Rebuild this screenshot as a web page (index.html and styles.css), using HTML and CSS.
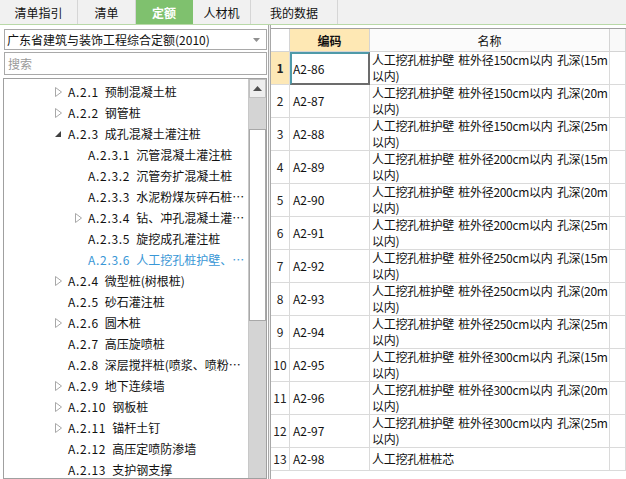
FILE: index.html
```html
<!DOCTYPE html>
<html lang="zh-CN">
<head>
<meta charset="utf-8">
<title>定额</title>
<link rel="stylesheet" href="styles.css">
</head>
<body>
<div class="tabbar">
  <div class="tab t1">清单指引</div>
  <div class="tab t2">清单</div>
  <div class="tab t3 active">定额</div>
  <div class="tab t4">人材机</div>
  <div class="tab t5">我的数据</div>
  <div class="tabfill"></div>
</div>
<div class="main">
  <div class="left">
    <div class="select">
      <span class="select-text">广东省建筑与装饰工程综合定额(2010)</span>
      <svg class="select-arrow" width="7" height="4" viewBox="0 0 7 4"><polygon points="0,0 7,0 3.5,4" fill="#909090"/></svg>
    </div>
    <div class="search">搜索</div>
    <div class="tree">
      <div class="tree-list">
        <div class="item l1"><span class="tw"><svg class="tri-c" width="7" height="10" viewBox="0 0 7 10"><polygon points="0.5,0.5 6.5,5 0.5,9.5" fill="#fff" stroke="#a8a8a8"/></svg></span><span class="code">A.2.1</span>预制混凝土桩</div>
        <div class="item l1"><span class="tw"><svg class="tri-c" width="7" height="10" viewBox="0 0 7 10"><polygon points="0.5,0.5 6.5,5 0.5,9.5" fill="#fff" stroke="#a8a8a8"/></svg></span><span class="code">A.2.2</span>钢管桩</div>
        <div class="item l1"><span class="tw"><svg class="tri-e" width="7" height="7" viewBox="0 0 7 7"><polygon points="6,0 6,6 0,6" fill="#404040"/></svg></span><span class="code">A.2.3</span>成孔混凝土灌注桩</div>
        <div class="item l2"><span class="tw"></span><span class="code">A.2.3.1</span>沉管混凝土灌注桩</div>
        <div class="item l2"><span class="tw"></span><span class="code">A.2.3.2</span>沉管夯扩混凝土桩</div>
        <div class="item l2"><span class="tw"></span><span class="code">A.2.3.3</span>水泥粉煤灰碎石桩…</div>
        <div class="item l2"><span class="tw"><svg class="tri-c" width="7" height="10" viewBox="0 0 7 10"><polygon points="0.5,0.5 6.5,5 0.5,9.5" fill="#fff" stroke="#a8a8a8"/></svg></span><span class="code">A.2.3.4</span>钻、冲孔混凝土灌…</div>
        <div class="item l2"><span class="tw"></span><span class="code">A.2.3.5</span>旋挖成孔灌注桩</div>
        <div class="item l2 sel"><span class="tw"></span><span class="code">A.2.3.6</span>人工挖孔桩护壁、…</div>
        <div class="item l1"><span class="tw"><svg class="tri-c" width="7" height="10" viewBox="0 0 7 10"><polygon points="0.5,0.5 6.5,5 0.5,9.5" fill="#fff" stroke="#a8a8a8"/></svg></span><span class="code">A.2.4</span>微型桩(树根桩)</div>
        <div class="item l1"><span class="tw"></span><span class="code">A.2.5</span>砂石灌注桩</div>
        <div class="item l1"><span class="tw"><svg class="tri-c" width="7" height="10" viewBox="0 0 7 10"><polygon points="0.5,0.5 6.5,5 0.5,9.5" fill="#fff" stroke="#a8a8a8"/></svg></span><span class="code">A.2.6</span>圆木桩</div>
        <div class="item l1"><span class="tw"></span><span class="code">A.2.7</span>高压旋喷桩</div>
        <div class="item l1"><span class="tw"></span><span class="code">A.2.8</span>深层搅拌桩(喷浆、喷粉…</div>
        <div class="item l1"><span class="tw"><svg class="tri-c" width="7" height="10" viewBox="0 0 7 10"><polygon points="0.5,0.5 6.5,5 0.5,9.5" fill="#fff" stroke="#a8a8a8"/></svg></span><span class="code">A.2.9</span>地下连续墙</div>
        <div class="item l1"><span class="tw"><svg class="tri-c" width="7" height="10" viewBox="0 0 7 10"><polygon points="0.5,0.5 6.5,5 0.5,9.5" fill="#fff" stroke="#a8a8a8"/></svg></span><span class="code">A.2.10</span>钢板桩</div>
        <div class="item l1"><span class="tw"><svg class="tri-c" width="7" height="10" viewBox="0 0 7 10"><polygon points="0.5,0.5 6.5,5 0.5,9.5" fill="#fff" stroke="#a8a8a8"/></svg></span><span class="code">A.2.11</span>锚杆土钉</div>
        <div class="item l1"><span class="tw"></span><span class="code">A.2.12</span>高压定喷防渗墙</div>
        <div class="item l1"><span class="tw"></span><span class="code">A.2.13</span>支护钢支撑</div>
      </div>
      <div class="vscroll">
        <div class="sb-btn"><svg width="9" height="5" viewBox="0 0 9 5"><polygon points="0,5 9,5 4.5,0" fill="#505050"/></svg></div>
        <div class="sb-track-top"></div>
        <div class="sb-thumb"></div>
        <div class="sb-track"></div>
      </div>
    </div>
  </div>
  <div class="splitter"></div>
  <div class="grid">
    <div class="hd rn"></div><div class="hd code-h">编码</div><div class="hd name-h">名称</div><div class="hd ex"></div>

    <div class="c rn cur">1</div><div class="c cd focus">A2-86</div><div class="c nm">人工挖孔桩护壁 桩外径150cm以内 孔深(15m<br>以内)</div><div class="c ex"></div>
    <div class="c rn">2</div><div class="c cd">A2-87</div><div class="c nm">人工挖孔桩护壁 桩外径150cm以内 孔深(20m<br>以内)</div><div class="c ex"></div>
    <div class="c rn">3</div><div class="c cd">A2-88</div><div class="c nm">人工挖孔桩护壁 桩外径150cm以内 孔深(25m<br>以内)</div><div class="c ex"></div>
    <div class="c rn">4</div><div class="c cd">A2-89</div><div class="c nm">人工挖孔桩护壁 桩外径200cm以内 孔深(15m<br>以内)</div><div class="c ex"></div>
    <div class="c rn">5</div><div class="c cd">A2-90</div><div class="c nm">人工挖孔桩护壁 桩外径200cm以内 孔深(20m<br>以内)</div><div class="c ex"></div>
    <div class="c rn">6</div><div class="c cd">A2-91</div><div class="c nm">人工挖孔桩护壁 桩外径200cm以内 孔深(25m<br>以内)</div><div class="c ex"></div>
    <div class="c rn">7</div><div class="c cd">A2-92</div><div class="c nm">人工挖孔桩护壁 桩外径250cm以内 孔深(15m<br>以内)</div><div class="c ex"></div>
    <div class="c rn">8</div><div class="c cd">A2-93</div><div class="c nm">人工挖孔桩护壁 桩外径250cm以内 孔深(20m<br>以内)</div><div class="c ex"></div>
    <div class="c rn">9</div><div class="c cd">A2-94</div><div class="c nm">人工挖孔桩护壁 桩外径250cm以内 孔深(25m<br>以内)</div><div class="c ex"></div>
    <div class="c rn">10</div><div class="c cd">A2-95</div><div class="c nm">人工挖孔桩护壁 桩外径300cm以内 孔深(15m<br>以内)</div><div class="c ex"></div>
    <div class="c rn">11</div><div class="c cd">A2-96</div><div class="c nm">人工挖孔桩护壁 桩外径300cm以内 孔深(20m<br>以内)</div><div class="c ex"></div>
    <div class="c rn">12</div><div class="c cd">A2-97</div><div class="c nm">人工挖孔桩护壁 桩外径300cm以内 孔深(25m<br>以内)</div><div class="c ex"></div>
    <div class="c rn short">13</div><div class="c cd short">A2-98</div><div class="c nm short">人工挖孔桩桩芯</div><div class="c ex short"></div>
  </div>
</div>
</body>
</html>
```
FILE: styles.css
```css
* { box-sizing: border-box; }
html, body { margin: 0; padding: 0; }
body {
  width: 626px;
  height: 479px;
  overflow: hidden;
  background: #fff;
  font-family: "Noto Sans CJK SC", "Noto Sans", sans-serif;
  font-size: 12px;
  color: #111;
}

/* tabs */
.tabbar {
  display: flex;
  height: 25px;
  background: #f1f1f1;
  border-bottom: 1px solid #b9d9a8;
}
.tab {
  display: flex;
  align-items: center;
  justify-content: center;
  border-right: 1px solid #d6d6d6;
  font-size: 12px;
  color: #111;
}
.t1 { width: 78px; }
.t2 { width: 58px; }
.t3 { width: 57px; }
.t4 { width: 58px; }
.t5 { width: 87px; }
.tab.active {
  background: #7fc16e;
  color: #fff;
  font-weight: bold;
  border-right-color: #7fc16e;
}
.tabfill { flex: 1; }

/* main */
.main {
  display: flex;
  height: 454px;
}
.left {
  width: 268px;
  display: flex;
  flex-direction: column;
  padding: 4px 1px 0 3px;
}
.select {
  height: 21px;
  margin-left: 1px;
  border: 1px solid #a9a9a9;
  background: #fff;
  display: flex;
  align-items: center;
  justify-content: space-between;
  padding: 0 6px 0 2px;
}
.select-text { white-space: nowrap; line-height: 1; }
.search {
  height: 23px;
  margin: 2px 0 0 1px;
  border: 1px solid #a9a9a9;
  background: #fff;
  color: #9a9a9a;
  display: flex;
  align-items: center;
  padding-left: 3px;
}
.tree {
  flex: 1;
  margin-top: 3px;
  border: 1px solid #a0a0a0;
  display: flex;
  overflow: hidden;
  background: #fff;
}
.tree-list {
  flex: 1;
  padding-top: 2px;
  min-width: 0;
}
.item {
  height: 21px;
  display: flex;
  align-items: center;
  white-space: nowrap;
  overflow: hidden;
  line-height: 1;
}
.l1 { padding-left: 51px; }
.l2 { padding-left: 71px; }
.tw {
  width: 13px;
  flex: none;
  display: flex;
  align-items: center;
}
.tri-e { margin-top: 1px; }
.code {
  letter-spacing: 0.7px;
  margin-right: 6px;
}
.item.sel { color: #3a97d6; }

.vscroll {
  width: 18px;
  flex: none;
  display: flex;
  flex-direction: column;
  border-left: 1px solid #c8c8c8;
  background: #d4d4d4;
}
.sb-btn {
  height: 19px;
  background: #eeeeee;
  border: 1px solid #c0c0c0;
  display: flex;
  align-items: center;
  justify-content: center;
}
.sb-track-top { height: 31px; }
.sb-thumb {
  height: 192px;
  background: #fff;
  border: 1px solid #a8a8a8;
}
.sb-track { flex: 1; }

.splitter {
  width: 3px;
  border-left: 1px solid #a8a8a8;
  border-right: 1px solid #a8a8a8;
  background: #f0f0f0;
}

/* grid */
.grid {
  flex: 1;
  margin-top: 3px;
  border-top: 1px solid #a0a0a0;
  display: grid;
  grid-template-columns: 19px 80px 240px 1fr;
  grid-auto-rows: min-content;
  align-content: start;
}
.hd {
  height: 23px;
  border-right: 1px solid #d4d4d4;
  border-bottom: 1px solid #d4d4d4;
  display: flex;
  align-items: center;
  justify-content: center;
  background: #f9f9f9;
}
.hd.rn { background: #fff; }
.code-h { background: #fee8b4; font-weight: bold; }
.name-h { background: #fbfbfb; }
.c {
  height: 33px;
  border-right: 1px solid #dadada;
  border-bottom: 1px solid #dadada;
  display: flex;
  align-items: center;
  line-height: 16px;
}
.c.short { height: 23px; }
.c.rn {
  justify-content: center;
  color: #222;
}
.c.rn.cur { background: #fde8b6; font-weight: bold; }
.c.cd { padding-left: 3px; }
.c.cd.focus {
  border: 2px solid #4f9aa9;
  border-right-color: #6c6c6c;
  border-bottom-color: #6c6c6c;
  padding-left: 1px;
}
.c.nm {
  padding-left: 2px;
  white-space: nowrap;
  overflow: hidden;
  letter-spacing: -0.3px;
  word-spacing: 2px;
}
```
